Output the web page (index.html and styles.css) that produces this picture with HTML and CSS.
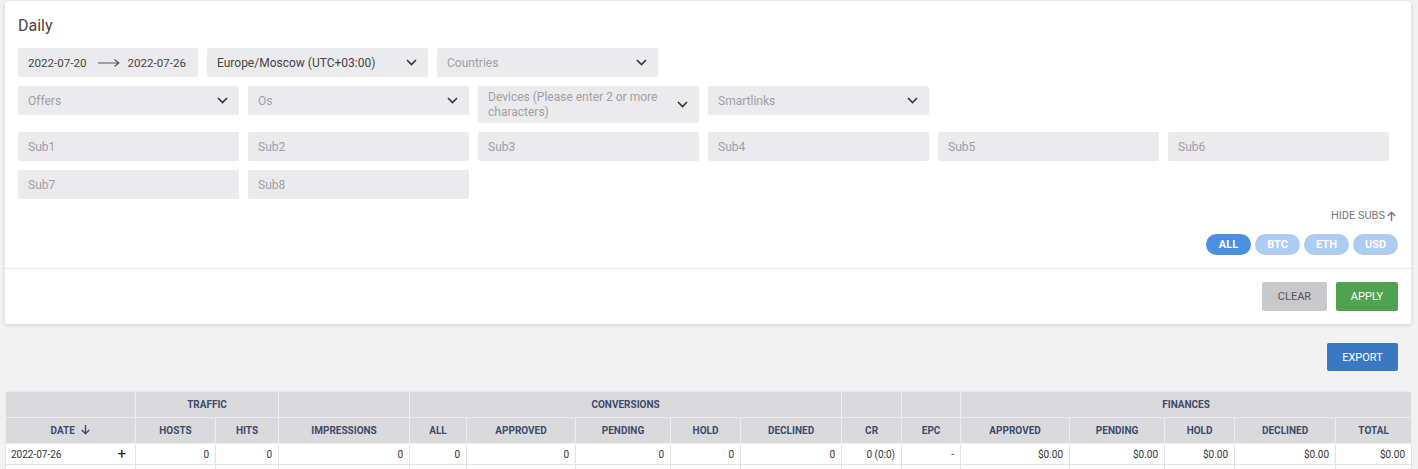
FILE: index.html
```html
<!DOCTYPE html>
<html lang="en">
<head>
    <meta charset="UTF-8">
    <title>Daily</title>
    <link rel="stylesheet" href="styles.css">
</head>
<body>
<div class="page">
    <div class="card">
        <div class="card-body">
            <h2 class="card-title">Daily</h2>

            <div class="filter-row">
                <div class="field date-range">
                    <span>2022-07-20</span>
                    <svg class="range-arrow" width="22" height="8" viewBox="0 0 22 8"><path d="M0 4H20.5M16.5 0.5L20.8 4L16.5 7.5" fill="none" stroke="#555" stroke-width="1.2"/></svg>
                    <span>2022-07-26</span>
                </div>
                <div class="field select filled">
                    <span>Europe/Moscow (UTC+03:00)</span>
                    <svg class="chevron" width="11" height="7" viewBox="0 0 11 7"><path d="M1 1L5.5 5.5L10 1" fill="none" stroke="#333" stroke-width="1.6"/></svg>
                </div>
                <div class="field select">
                    <span>Countries</span>
                    <svg class="chevron" width="11" height="7" viewBox="0 0 11 7"><path d="M1 1L5.5 5.5L10 1" fill="none" stroke="#333" stroke-width="1.6"/></svg>
                </div>
            </div>

            <div class="filter-grid">
                <div class="field select">
                    <span>Offers</span>
                    <svg class="chevron" width="11" height="7" viewBox="0 0 11 7"><path d="M1 1L5.5 5.5L10 1" fill="none" stroke="#333" stroke-width="1.6"/></svg>
                </div>
                <div class="field select">
                    <span>Os</span>
                    <svg class="chevron" width="11" height="7" viewBox="0 0 11 7"><path d="M1 1L5.5 5.5L10 1" fill="none" stroke="#333" stroke-width="1.6"/></svg>
                </div>
                <div class="field select tall">
                    <span>Devices (Please enter 2 or more characters)</span>
                    <svg class="chevron" width="11" height="7" viewBox="0 0 11 7"><path d="M1 1L5.5 5.5L10 1" fill="none" stroke="#333" stroke-width="1.6"/></svg>
                </div>
                <div class="field select">
                    <span>Smartlinks</span>
                    <svg class="chevron" width="11" height="7" viewBox="0 0 11 7"><path d="M1 1L5.5 5.5L10 1" fill="none" stroke="#333" stroke-width="1.6"/></svg>
                </div>
                <div class="grid-break"></div>

                <div class="field">Sub1</div>
                <div class="field">Sub2</div>
                <div class="field">Sub3</div>
                <div class="field">Sub4</div>
                <div class="field">Sub5</div>
                <div class="field">Sub6</div>
                <div class="field">Sub7</div>
                <div class="field">Sub8</div>
            </div>

            <div class="subs-toggle">
                HIDE SUBS
                <svg width="9" height="10" viewBox="0 0 9 10"><path d="M4.5 10V1.5M0.8 5L4.5 1.2L8.2 5" fill="none" stroke="#777" stroke-width="1.4"/></svg>
            </div>

            <div class="currency">
                <span class="pill active">ALL</span>
                <span class="pill">BTC</span>
                <span class="pill">ETH</span>
                <span class="pill">USD</span>
            </div>
        </div>
        <div class="card-footer">
            <button class="btn btn-clear">CLEAR</button>
            <button class="btn btn-apply">APPLY</button>
        </div>
    </div>

    <div class="toolbar">
        <button class="btn btn-export">EXPORT</button>
    </div>

    <table class="report">
        <colgroup>
            <col style="width:130px"><col style="width:80px"><col style="width:63px"><col style="width:131px">
            <col style="width:57px"><col style="width:109px"><col style="width:95px"><col style="width:70px">
            <col style="width:101px"><col style="width:60px"><col style="width:59px"><col style="width:109px">
            <col style="width:95px"><col style="width:70px"><col style="width:101px"><col style="width:76px">
        </colgroup>
        <thead>
            <tr>
                <th></th>
                <th colspan="2">TRAFFIC</th>
                <th></th>
                <th colspan="5">CONVERSIONS</th>
                <th></th>
                <th></th>
                <th colspan="5">FINANCES</th>
            </tr>
            <tr>
                <th>DATE <svg class="sort" width="9" height="10" viewBox="0 0 9 10"><path d="M4.5 0V8.5M0.8 5L4.5 8.8L8.2 5" fill="none" stroke="#3d4b6b" stroke-width="1.4"/></svg></th>
                <th>HOSTS</th>
                <th>HITS</th>
                <th>IMPRESSIONS</th>
                <th>ALL</th>
                <th>APPROVED</th>
                <th>PENDING</th>
                <th>HOLD</th>
                <th>DECLINED</th>
                <th>CR</th>
                <th>EPC</th>
                <th>APPROVED</th>
                <th>PENDING</th>
                <th>HOLD</th>
                <th>DECLINED</th>
                <th>TOTAL</th>
            </tr>
        </thead>
        <tbody>
            <tr>
                <td class="date-cell"><div class="date-wrap"><span>2022-07-26</span><span class="expand">+</span></div></td>
                <td>0</td>
                <td>0</td>
                <td>0</td>
                <td>0</td>
                <td>0</td>
                <td>0</td>
                <td>0</td>
                <td>0</td>
                <td>0 (0:0)</td>
                <td>-</td>
                <td>$0.00</td>
                <td>$0.00</td>
                <td>$0.00</td>
                <td>$0.00</td>
                <td>$0.00</td>
            </tr>
            <tr>
                <td></td><td></td><td></td><td></td><td></td><td></td><td></td><td></td>
                <td></td><td></td><td></td><td></td><td></td><td></td><td></td><td></td>
            </tr>
        </tbody>
    </table>
</div>
</body>
</html>
```

FILE: styles.css
```css
body {
    margin: 0;
    background-color: #f2f2f2;
    font-family: Roboto, "Liberation Sans", Arial, sans-serif;
    color: #333;
}
.page {
    padding: 1px 7px 0 5px;
}
.card {
    background-color: #ffffff;
    border-radius: 3px;
    box-shadow: 0 1px 4px rgba(0, 0, 0, 0.16);
}
.card-body {
    padding: 13px 13px 13px 13px;
}
.card-title {
    margin: 0 0 10px 0;
    font-size: 16px;
    font-weight: 400;
    line-height: 24px;
    color: #444;
}
.filter-row {
    display: flex;
    gap: 9px;
    margin-bottom: 9px;
}
.filter-row .field {
    width: 221px;
}
.filter-row .date-range {
    width: 180px;
}
.filter-grid {
    display: grid;
    grid-template-columns: repeat(6, 221px);
    gap: 9px;
    align-items: start;
}
.grid-break {
    grid-column: span 2;
}
.field {
    box-sizing: border-box;
    height: 29px;
    padding: 0 10px;
    display: flex;
    align-items: center;
    background-color: #ebebed;
    border-radius: 2px;
    font-size: 12px;
    color: #a0a0a4;
    white-space: nowrap;
}
.field.select {
    justify-content: space-between;
}
.field.filled,
.date-range {
    color: #444;
}
.date-range {
    font-size: 11.6px;
}
.field.tall {
    height: 37px;
    line-height: 15px;
    white-space: normal;
}
.field.tall span {
    width: 170px;
}
.chevron {
    flex-shrink: 0;
    margin-right: 1px;
}
.range-arrow {
    flex-shrink: 0;
    margin: 0 8px 0 11px;
}
.subs-toggle {
    margin-top: 10px;
    display: flex;
    justify-content: flex-end;
    align-items: center;
    gap: 2px;
    padding-right: 2px;
    font-size: 11px;
    line-height: 14px;
    color: #777;
}
.currency {
    margin-top: 11px;
    display: flex;
    justify-content: flex-end;
    gap: 4px;
}
.pill {
    width: 45px;
    height: 21px;
    line-height: 21px;
    text-align: center;
    border-radius: 11px;
    background-color: #aecbf0;
    color: #ffffff;
    font-size: 11px;
    font-weight: 700;
}
.pill.active {
    background-color: #4a8fe0;
}
.card-footer {
    border-top: 1px solid #e8e8e8;
    padding: 13px;
    display: flex;
    justify-content: flex-end;
    gap: 9px;
}
.btn {
    border: none;
    border-radius: 2px;
    height: 29px;
    font-family: inherit;
    font-size: 11px;
    padding: 0;
}
.btn-clear {
    width: 65px;
    background-color: #c9c9cb;
    color: #555;
}
.btn-apply {
    width: 62px;
    background-color: #4fa24f;
    color: #ffffff;
}
.toolbar {
    display: flex;
    justify-content: flex-end;
    padding: 19px 13px 20px 0;
}
.btn-export {
    width: 71px;
    height: 28px;
    background-color: #3a78c2;
    color: #ffffff;
}
.report {
    width: 1406px;
    table-layout: fixed;
    border-collapse: collapse;
    font-size: 10px;
}
.report th {
    height: 25px;
    padding: 0 4px;
    background-color: #dadadd;
    border: 1px solid #ececee;
    color: #3d4b6b;
    font-weight: 700;
    text-align: center;
    white-space: nowrap;
}
.report th .sort {
    margin-left: 4px;
    vertical-align: -1px;
}
.report td {
    height: 20px;
    padding: 0 6px;
    background-color: #ffffff;
    border: 1px solid #e3e3e3;
    text-align: right;
    color: #333;
}
.report td.date-cell {
    text-align: left;
    padding: 0 9px 0 5px;
}
.date-wrap {
    display: flex;
    justify-content: space-between;
    align-items: center;
}
.expand {
    font-size: 15px;
    line-height: 14px;
    color: #222;
}
```
